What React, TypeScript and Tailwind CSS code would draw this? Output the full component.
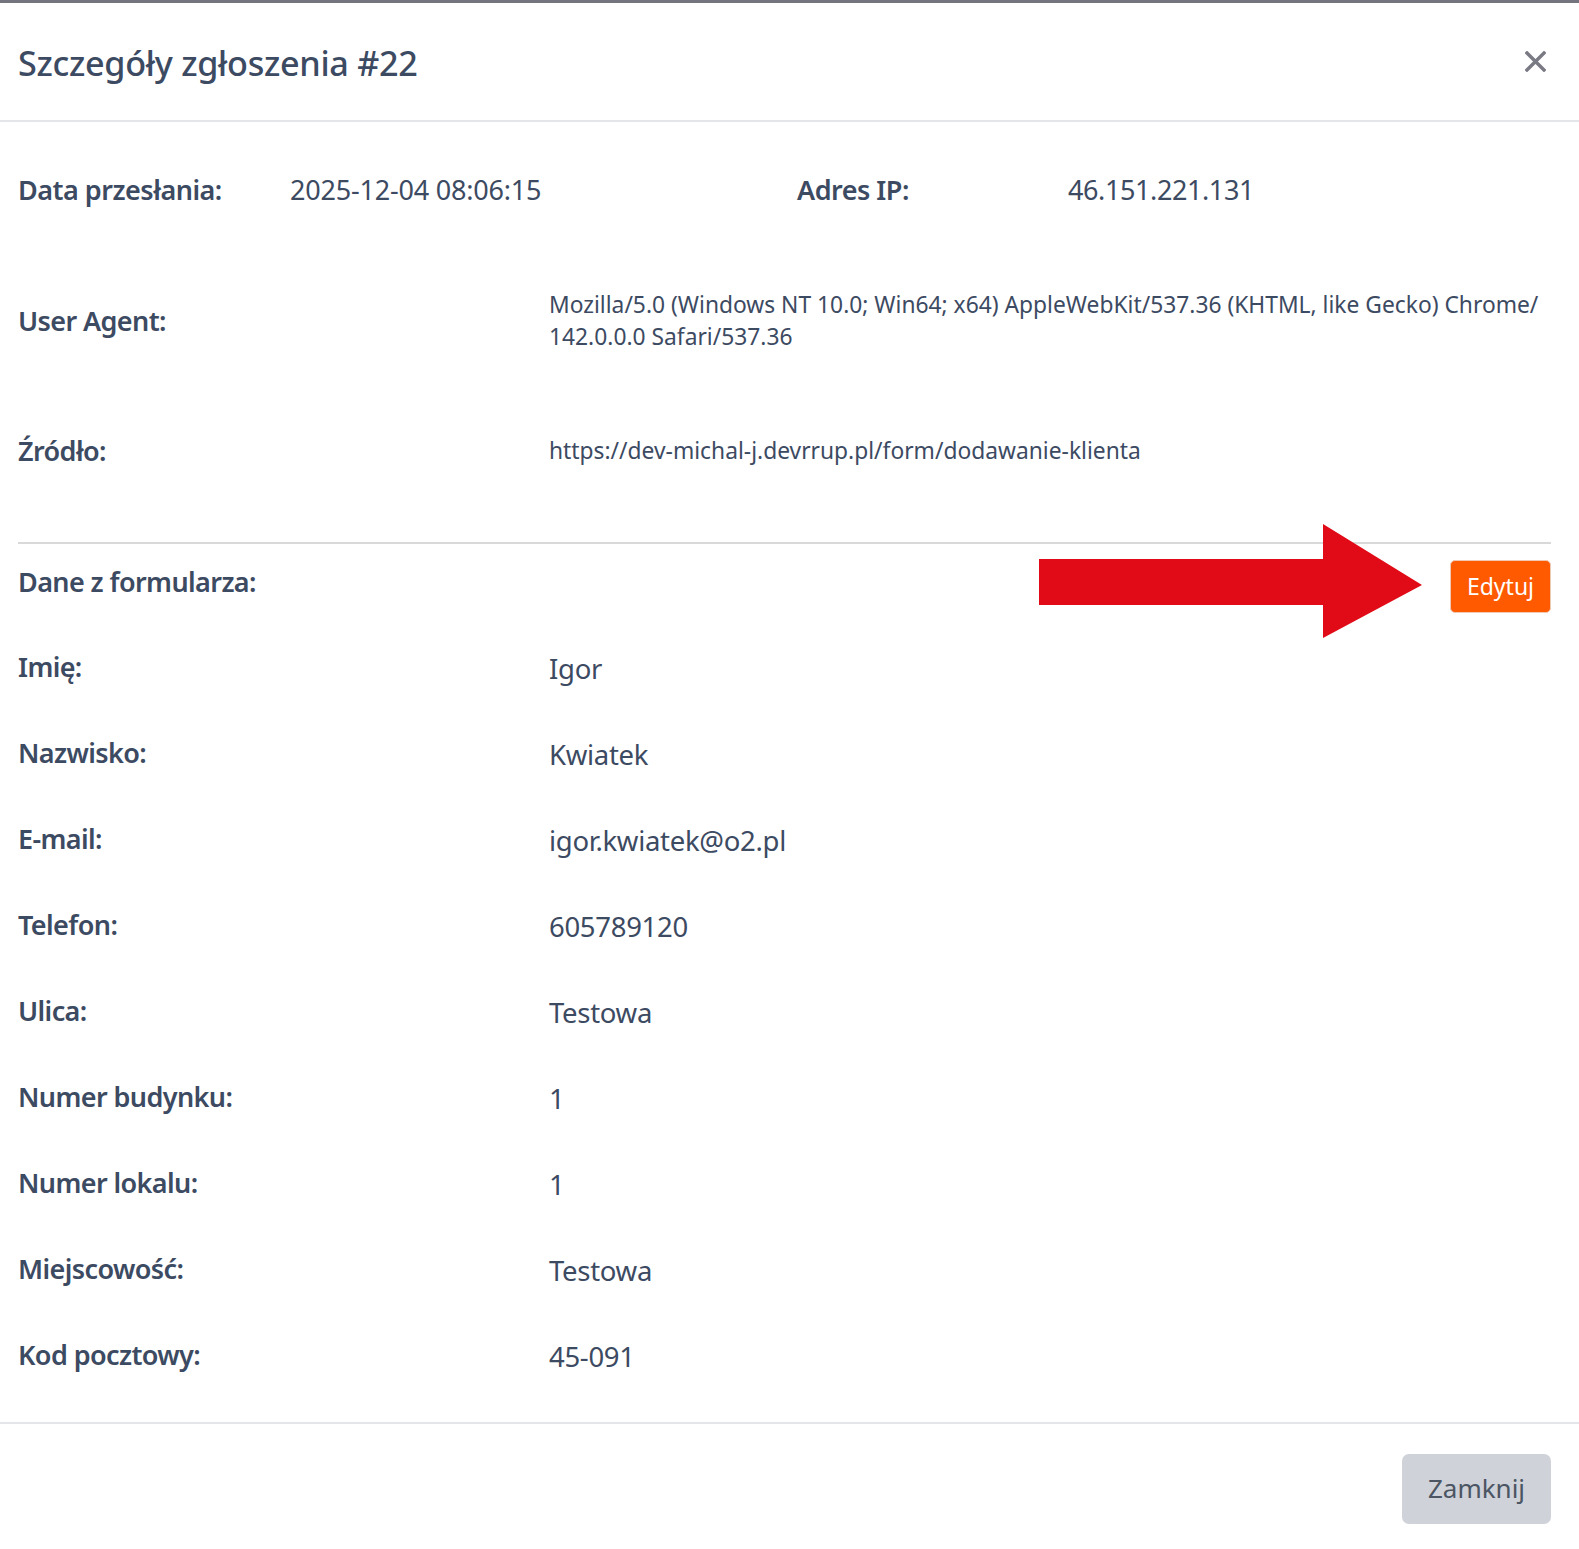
import React from "react";

const topRows = [
  { label: "User Agent:", value: "Mozilla/5.0 (Windows NT 10.0; Win64; x64) AppleWebKit/537.36 (KHTML, like Gecko) Chrome/ 142.0.0.0 Safari/537.36" },
  { label: "Źródło:", value: "https://dev-michal-j.devrrup.pl/form/dodawanie-klienta" },
];

const formRows = [
  ["Imię:", "Igor"],
  ["Nazwisko:", "Kwiatek"],
  ["E-mail:", "igor.kwiatek@o2.pl"],
  ["Telefon:", "605789120"],
  ["Ulica:", "Testowa"],
  ["Numer budynku:", "1"],
  ["Numer lokalu:", "1"],
  ["Miejscowość:", "Testowa"],
  ["Kod pocztowy:", "45-091"],
];

export default function App() {
  return (
    <div className="w-full h-[1549px] overflow-hidden bg-white font-['Noto_Sans','Open_Sans',sans-serif] text-[#3c4a62]">
      <div className="h-[3px] bg-[#74747f]" />
      <header className="h-[119px] border-b-2 border-[#e4e5e9] flex items-center justify-between pl-[18px] pr-[33px] pt-[4px]">
        <h1 className="text-[34.2px] font-medium leading-none tracking-[-0.3px]">Szczegóły zgłoszenia #22</h1>
        <button className="w-[22px] h-[22px] flex items-center justify-center -mt-[4px]">
          <svg width="21" height="21" viewBox="0 0 21 21">
            <path d="M2 2 L19 19 M19 2 L2 19" stroke="#7a7a85" strokeWidth="3.4" strokeLinecap="square" />
          </svg>
        </button>
      </header>

      <main className="pl-[18px] pr-[28px] pt-[3px] pb-[23px]">
        <div className="h-[130.5px] grid grid-cols-[272px_507px_271px_1fr] items-center text-[27px]">
          <div className="font-semibold tracking-[-0.5px]">Data przesłania:</div>
          <div className="tracking-[-0.2px]">2025-12-04 08:06:15</div>
          <div className="font-semibold tracking-[-0.5px]">Adres IP:</div>
          <div className="tracking-[-0.4px]">46.151.221.131</div>
        </div>
        {topRows.map((r) => (
          <div key={r.label} className="h-[130.5px] grid grid-cols-[531px_1fr] items-center">
            <div className="text-[27px] font-semibold tracking-[-0.6px]">{r.label}</div>
            <div className="text-[22.8px] leading-[32px]">{r.value}</div>
          </div>
        ))}

        <div className="mt-[25px] h-[2px] bg-[#d9d9d9]" />

        <div className="relative mt-[16px] h-[53px] flex items-center justify-between">
          <div className="text-[27px] font-semibold tracking-[-0.6px] -mt-[8px]">Dane z formularza:</div>
          <svg className="absolute left-[1021px] top-[-36px]" width="384" height="115" viewBox="0 0 384 115">
            <polygon points="0,35 284,35 284,0 383,61 284,114 284,81 0,81" fill="#e10a17" />
          </svg>
          <button className="w-[101px] h-[53px] rounded-[5px] bg-[#ff5a00] border border-[#f0c9b5] text-white text-[23px]">
            Edytuj
          </button>
        </div>

        <div className="mt-[12px]">
          {formRows.map(([l, v]) => (
            <div key={l} className="h-[86px] grid grid-cols-[531px_1fr] items-center">
              <div className="text-[27px] font-semibold tracking-[-0.6px]">{l}</div>
              <div className="text-[27.5px] tracking-[-0.3px] pt-[3px]">{v}</div>
            </div>
          ))}
        </div>
      </main>

      <footer className="border-t-2 border-[#e4e5e9] pt-[30px] pr-[28px] flex justify-end">
        <button className="w-[149px] h-[70px] rounded-[7px] bg-[#cfd2d8] text-[#4b5563] text-[26px]">Zamknij</button>
      </footer>
    </div>
  );
}
